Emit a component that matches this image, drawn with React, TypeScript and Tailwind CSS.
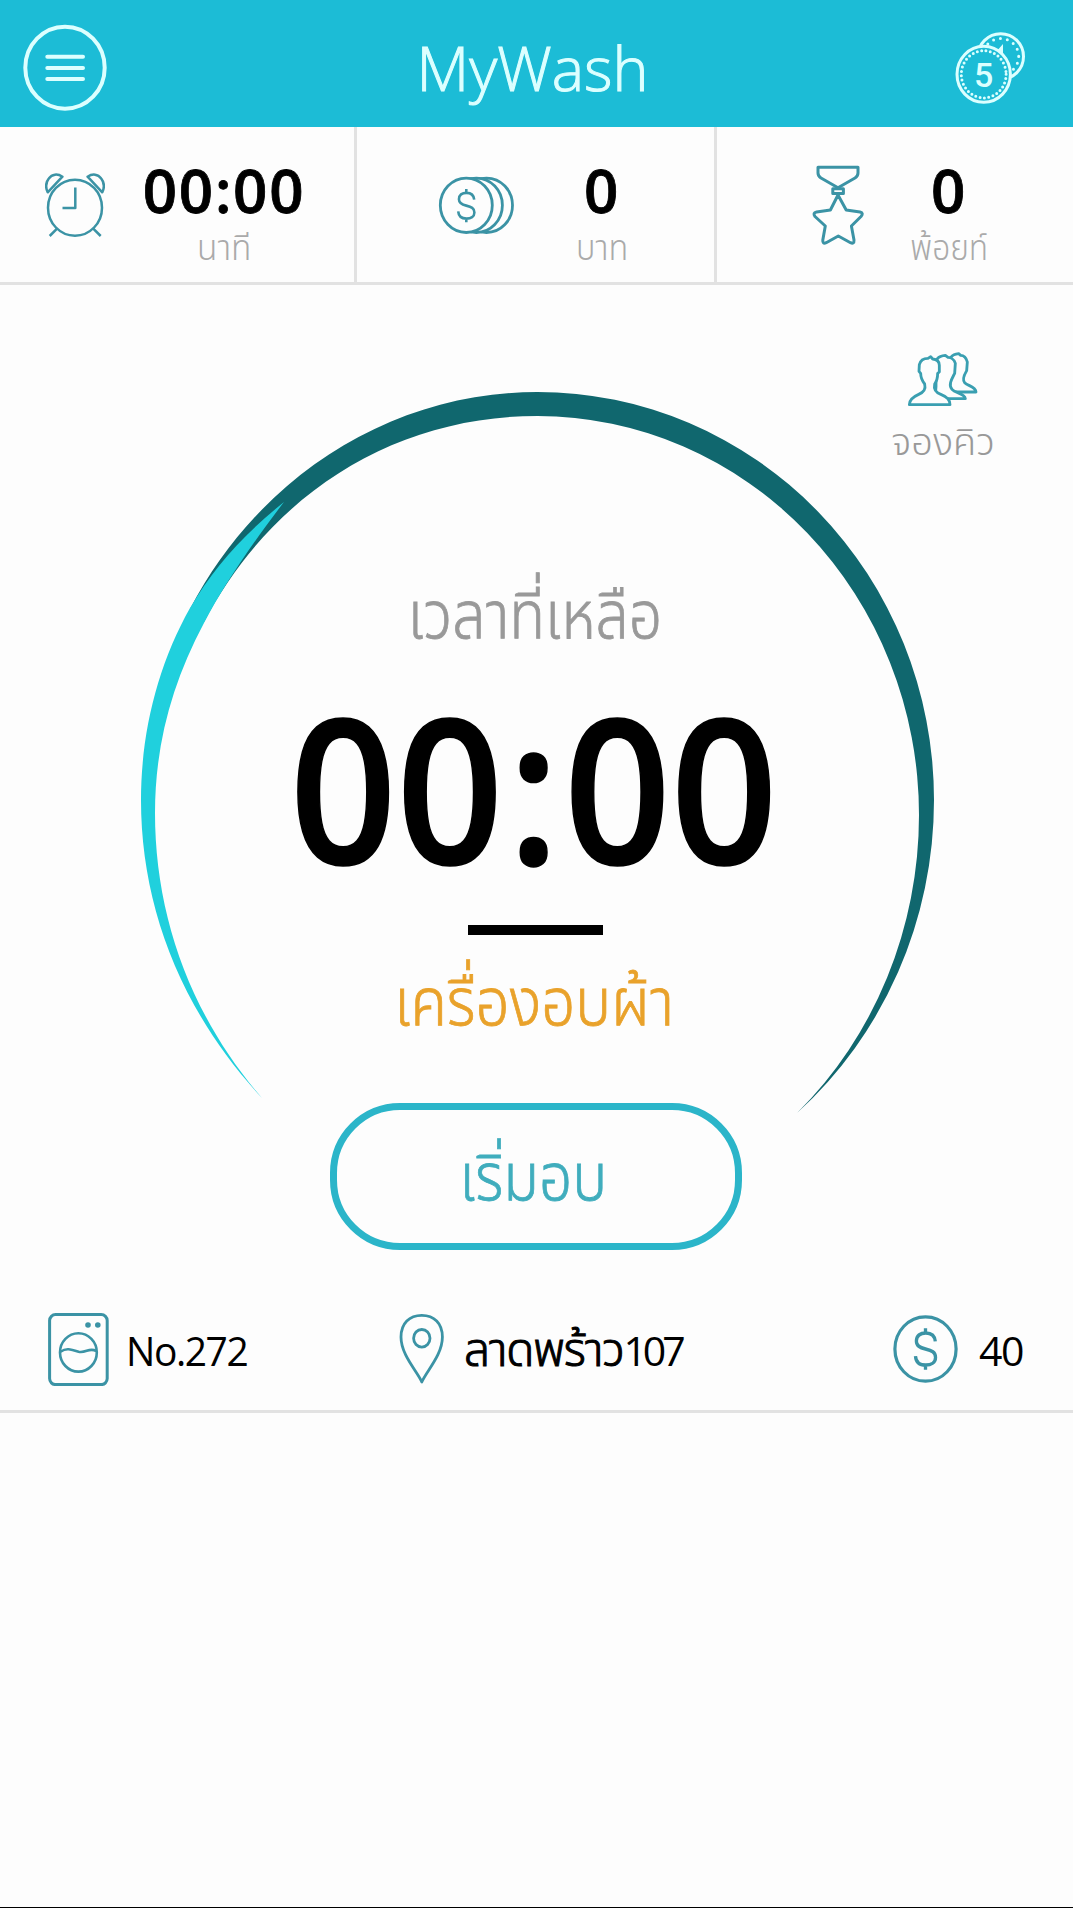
import React, { useState } from 'react';
import type { ReactNode } from 'react';

const ICON = '#3b93a5';

// Dollar sign shared by the coin icons, centred on 0,0
const DollarMark = () => (
  <path
    d="M0 -17V-13M0 17V13M8.6 -6.2C8.2 -11 4.8 -13.2 0.2 -13.2C-4.6 -13.2 -8 -10.8 -8 -6.6C-8 -2.6 -5 -1.2 0 0C5.4 1.3 8.8 2.6 8.8 6.9C8.8 11 5 13.2 0.2 13.2C-4.8 13.2 -8.4 10.8 -8.8 5.8"
    fill="none"
  />
);

const MenuIcon = () => (
  <svg width="84" height="88" viewBox="0 0 84 88" fill="none" stroke="#dcffff" strokeWidth="4" strokeLinecap="round">
    <ellipse cx="42" cy="43.7" rx="39.7" ry="41" />
    <path d="M24.3 32.7H60M24.3 44H60M24.3 55H60" />
  </svg>
);

const PointCoinsIcon = () => (
  <svg width="72" height="76" viewBox="0 0 72 76" fill="none" stroke="#dcffff" strokeWidth="3">
    <circle cx="46.7" cy="26.5" r="22.8" />
    <circle cx="46.7" cy="26.5" r="18" strokeDasharray="0 7" strokeLinecap="round" />
    <path d="M44 22L47.5 18V26" />
    <ellipse cx="29.7" cy="44.3" rx="26.7" ry="28" fill="#1cbcd6" />
    <ellipse cx="29.7" cy="44.3" rx="22.4" ry="23.6" strokeDasharray="0 4.4" strokeLinecap="round" />
    <text x="29.7" y="57" textAnchor="middle" fill="#dcffff" stroke="none" className="font-['Roboto'] text-[34px] font-medium">5</text>
  </svg>
);

const ClockIcon = () => (
  <svg width="60" height="65" viewBox="0 0 60 65" fill="none" stroke={ICON} strokeWidth="2.5" strokeLinecap="round" strokeLinejoin="round">
    <ellipse cx="30" cy="34.7" rx="27" ry="28" />
    <path d="M30.3 14.5V35H17.5M12.3 55.3L4.7 63M48 55.3L55.7 63" strokeLinecap="butt" />
    <path d="M2.7 19.3L17.4 3.7C12.5 0.4 7 1 3.8 5.5C0.7 9.5 0.7 15 2.7 19.3Z" />
    <path d="M57.3 19.3L42.6 3.7C47.5 0.4 53 1 56.2 5.5C59.3 9.5 59.3 15 57.3 19.3Z" />
  </svg>
);

const CoinsIcon = () => (
  <svg width="77" height="60" viewBox="0 0 77 60" fill="#fdfdfd" stroke={ICON} strokeWidth="2.8">
    <ellipse cx="48.5" cy="29.3" rx="26" ry="27.2" />
    <ellipse cx="38.4" cy="29.3" rx="26" ry="27.2" />
    <ellipse cx="28.3" cy="29.3" rx="26" ry="27.2" />
    <g transform="translate(28.3 29.7) scale(0.92 0.98)"><DollarMark /></g>
  </svg>
);

const MedalIcon = () => (
  <svg width="54" height="82" viewBox="0 0 54 82" fill="none" stroke={ICON} strokeWidth="3" strokeLinejoin="round">
    <path d="M6 3.3H46V9Q46 12 43 14L26 23.8L9 14Q6 12 6 9Z" />
    <rect x="20.8" y="24.8" width="10.6" height="4.8" />
    <path d="M26 31L34.2 46L48 48Q52 49 49 52.5L39.4 62L42 76Q42.2 80.5 38.5 78.7L26.3 72L14.2 78.7Q10.4 80.5 10.8 76L13.3 62L3 52.5Q0.4 49 4.6 48L18.4 46Z" />
  </svg>
);

const QueueIcon = () => (
  <svg width="74" height="58" viewBox="138 90 222 174" fill="#fdfdfd" stroke="#3a9fb1" strokeWidth="8.5" strokeLinejoin="round">
    <path d="M262 216H348C347 200 324 198 314 188C306 180 312 166 320 152L322 126C318 110 308 106 302 106L296 101C272 104 266 116 268 134V200Z" />
    <path d="M225 236H316C314 219 286 220 276 208C264 194 276 176 284 160L286 130C282 116 270 112 264 112L256 106C232 108 226 120 228 136V200Z" />
    <path d="M148 254C148 238 160 230 176 223C192 216 198 208 194 192C186 182 182 172 182 160L177 154L178 134C182 118 192 115 204 115L212 110L218 117C230 118 238 124 238 136V156L233 160C233 174 230 184 224 192C220 210 228 218 244 224C260 230 270 238 270 254Z" />
  </svg>
);

const WasherIcon = () => (
  <svg width="61" height="73" viewBox="0 0 61 73" fill="none" stroke={ICON} strokeWidth="3">
    <rect x="1.6" y="1.6" width="57.6" height="70" rx="6" />
    <ellipse cx="30.4" cy="39.4" rx="18.4" ry="19.2" strokeWidth="2.6" />
    <path d="M12.5 38.8C18 34.8 22 36 30.6 38.8C38 40.5 41 34 48.3 38" strokeWidth="2.6" />
    <circle cx="40" cy="12" r="2.8" fill={ICON} stroke="none" />
    <circle cx="49.8" cy="12" r="2.8" fill={ICON} stroke="none" />
  </svg>
);

const PinIcon = () => (
  <svg width="46" height="72" viewBox="0 0 46 72" fill="none" stroke={ICON} strokeWidth="2.8" strokeLinejoin="round">
    <path d="M22.8 69C18 58 2 42 2 24C2 10 10.5 2.3 22.8 2.3C35 2.3 43.4 10 43.4 24C43.4 42 27.5 58 22.8 69Z" />
    <ellipse cx="22.8" cy="25.3" rx="8.2" ry="8.8" />
  </svg>
);

const PriceIcon = () => (
  <svg width="66" height="72" viewBox="0 0 66 72" fill="none" stroke={ICON} strokeWidth="3.2">
    <ellipse cx="32.5" cy="36" rx="30.6" ry="32.2" />
    <g transform="translate(32.5 36) scale(1.14 1.22)" strokeWidth="2.9"><DollarMark /></g>
  </svg>
);

const Ring = () => (
  <svg width="1073" height="850" viewBox="0 285 1073 850">
    <path
      fill="#10676e"
      d="M797 1113A396.5 414 0 0 0 934 800A396.5 408 0 0 0 537.5 392C390 392 258 478 190 609L195 628L204 622C272 493 395 416 537.5 416A382 399 0 0 1 919 815A382 407 0 0 1 797 1113Z"
    />
    <path
      fill="#20d0dd"
      d="M284 502C243 535 214 567 190 608C158 665 141 732 141 800C141 905 180 1010 262 1098C190 1015 155 915 155 813C155 745 172 683 204 623C223 587 248 549 284 502Z"
    />
  </svg>
);

interface StatProps {
  icon: ReactNode;
  value: string;
  label: string;
  className: string;
  textClass: string;
  labelClass: string;
}

const Stat = ({ icon, value, label, className, textClass, labelClass }: StatProps) => (
  <div className={`flex h-full ${className}`}>
    {icon}
    <div className={`flex flex-col items-center pt-[28px] whitespace-nowrap ${textClass}`}>
      <span className="text-[60px] leading-[70px] font-semibold tracking-[1.8px] text-black [-webkit-text-stroke:0.8px_black]">{value}</span>
      <span className={`mt-[2px] text-[36px] leading-[40px] font-light text-[#aaaaaa] ${labelClass}`}>{label}</span>
    </div>
  </div>
);

export default function App() {
  const [remaining] = useState('00:00');
  const [minutes, seconds] = remaining.split(':');

  return (
    <div className="w-[1073px] h-[1908px] flex flex-col bg-[#fdfdfd] border-b border-black overflow-hidden font-['Open_Sans','Noto_Sans_Thai','Noto_Sans',sans-serif]">
      {/* Header */}
      <header className="h-[127px] shrink-0 flex items-start justify-between bg-[#1cbcd6] pl-[27px] pr-[47px]">
        <button className="mt-6 -ml-1"><MenuIcon /></button>
        <h1 className="mt-[33px] pl-[4px] text-[61px] leading-[70px] font-light text-[#dcffff] [-webkit-text-stroke:1px_#dcffff]">MyWash</h1>
        <button className="mt-[30px]"><PointCoinsIcon /></button>
      </header>

      {/* Balance row */}
      <section className="h-[158px] shrink-0 grid grid-cols-[357px_360px_356px] border-b-[3px] border-[#e2e2e2]">
        <Stat icon={<div className="pt-[46px]"><ClockIcon /></div>} value={remaining} label="นาที" className="pl-[45px] border-r-[3px] border-[#e2e2e2]" textClass="w-[160px] ml-[39px]" labelClass="scale-x-[.93]" />
        <Stat icon={<div className="pt-[49px]"><CoinsIcon /></div>} value="0" label="บาท" className="pl-[81px] border-r-[3px] border-[#e2e2e2]" textClass="w-[100px] ml-[37px]" labelClass="scale-x-90" />
        <Stat icon={<div className="pt-[37px]"><MedalIcon /></div>} value="0" label="พ้อยท์" className="pl-[95px]" textClass="w-[120px] ml-[23px]" labelClass="scale-x-[.88]" />
      </section>

      {/* Timer */}
      <main className="h-[850px] shrink-0 grid">
        <div className="[grid-area:1/1]"><Ring /></div>

        <div className="[grid-area:1/1] flex flex-col items-center pr-[3px] pt-[282px] whitespace-nowrap">
          <p className="text-[66px] leading-[90px] font-light text-[#999999] scale-x-[.89] [-webkit-text-stroke:0.8px_#999999]">เวลาที่เหลือ</p>
          <p className="mt-[29px] mr-[3px] text-[202px] leading-[200px] font-semibold text-black scale-x-[.925] [-webkit-text-stroke:1.5px_black]">
            {minutes}<span className="px-[5px]">:</span>{seconds}
          </p>
          <div className="mt-[39px] ml-[1px] h-[10px] w-[135px] bg-black" />
          <p className="mt-[19px] mr-[2px] text-[66px] leading-[90px] font-light text-[#e9a22b] scale-x-[.907] [-webkit-text-stroke:0.8px_#e9a22b]">เครื่องอบผ้า</p>
        </div>

        <button className="[grid-area:1/1] justify-self-end self-start mt-[65px] mr-[70px] w-[120px] flex flex-col items-center whitespace-nowrap">
          <QueueIcon />
          <span className="mt-[7px] text-[38px] leading-[50px] font-light text-[#999999]">จองคิว</span>
        </button>
      </main>

      <button className="-mt-[32px] ml-[330px] w-[412px] h-[147px] shrink-0 rounded-[70px] border-[7px] border-[#2bb5c9] pb-[6px] pr-[5px] text-[66px] leading-[90px] font-light text-[#40adbd]">
        <span className="inline-block scale-x-[.885] [-webkit-text-stroke:0.8px_#40adbd]">เริ่มอบ</span>
      </button>

      {/* Machine info */}
      <footer className="h-[163px] shrink-0 flex items-start border-b-[3px] border-[#e2e2e2] pt-[63px] pl-[48px] text-[41px] leading-[74px] text-black whitespace-nowrap">
        <div className="w-[351px] flex gap-[17px]">
          <WasherIcon />
          <span className="tracking-[-1.5px] origin-left scale-x-[.95]">No.272</span>
        </div>
        <div className="w-[494px] flex gap-[19px]">
          <PinIcon />
          <span>
            <span className="text-[46px] leading-[70px] font-light tracking-[-1.2px] [-webkit-text-stroke:1px_black]">ลาดพร้าว</span>
            <span className="tracking-[-4px]">107</span>
          </span>
        </div>
        <div className="flex gap-[20px]">
          <PriceIcon />
          <span className="tracking-[-1.5px]">40</span>
        </div>
      </footer>
    </div>
  );
}
